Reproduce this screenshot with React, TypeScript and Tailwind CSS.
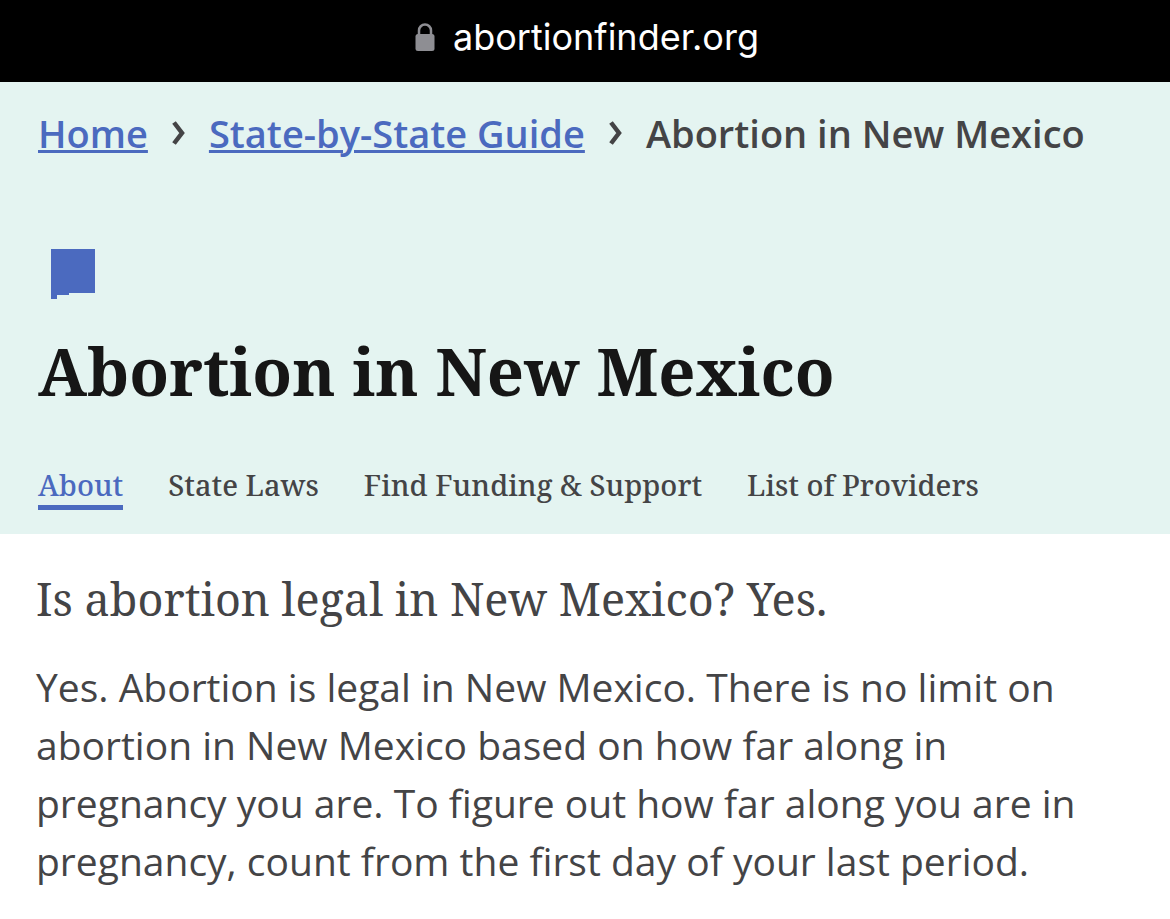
import type { ReactNode } from "react";

const tabs = [
  { label: "About", href: "#about" },
  { label: "State Laws", href: "#state-laws" },
  { label: "Find Funding & Support", href: "#funding" },
  { label: "List of Providers", href: "#providers" },
];

function Chevron() {
  return (
    <svg aria-hidden viewBox="0 0 13 24" className="h-6 w-[13px] shrink-0" fill="none">
      <path d="M2 1.500L10 12L2 22.500" stroke="#444446" strokeWidth="4.500" />
    </svg>
  );
}

function Crumb({ href, children }: { href: string; children: ReactNode }) {
  return (
    <a href={href} className="text-[#4b6abf] underline decoration-3 underline-offset-2">
      {children}
    </a>
  );
}

export default function App() {
  return (
    <div className="bg-white font-['Open_Sans','Noto_Sans',sans-serif] text-[#444446]">
      {/* browser address bar */}
      <div className="flex h-[82px] items-center justify-center gap-[18px] bg-black pb-2 pl-1 font-['Inter',sans-serif] text-4xl text-white">
        <svg aria-hidden viewBox="0 0 20 28" className="h-7 w-5" fill="none">
          <rect x="0.500" y="11" width="19" height="17" rx="2.500" fill="#8e8e93" />
          <path d="M4 12V7.500a6 6 0 0 1 12 0V12" stroke="#8e8e93" strokeWidth="2.500" />
        </svg>
        <span>abortionfinder.org</span>
      </div>

      <header className="bg-[#e4f4f1] px-[38px] py-6">
        <nav
          aria-label="Breadcrumb"
          className="flex items-center gap-6 text-[38px] leading-[54px] font-semibold whitespace-nowrap"
        >
          <Crumb href="#home">Home</Crumb>
          <Chevron />
          <Crumb href="#guide">State-by-State Guide</Crumb>
          <Chevron />
          <span aria-current="page">Abortion in New Mexico</span>
        </nav>

        {/* outline of the state */}
        <svg aria-hidden viewBox="0 0 44 50" className="mt-[89px] ml-[13px] h-[50px] w-11">
          <path d="M0 0H44V44H18V46H6V50H0Z" fill="#4b6abf" />
        </svg>

        <h1 className="mt-8 font-['Noto_Serif','DejaVu_Serif',serif] text-[65px] leading-[80px] font-bold text-[#161616]">
          Abortion in New Mexico
        </h1>

        <nav
          aria-label="Sections"
          className="mt-[54px] flex gap-[45px] font-['Noto_Serif','DejaVu_Serif',serif] text-[29px] leading-10 font-medium whitespace-nowrap"
        >
          {tabs.map((tab, i) => (
            <a
              key={tab.href}
              href={tab.href}
              className={i === 0 ? "border-b-5 border-[#4b6abf] text-[#4b6abf]" : ""}
            >
              {tab.label}
            </a>
          ))}
        </nav>
      </header>

      <main className="px-9 pt-9">
        <h2 className="font-['Noto_Serif','DejaVu_Serif',serif] text-[45px] leading-[58px]">
          Is abortion legal in New Mexico? Yes.
        </h2>
        <p className="mt-[30px] text-[39px] leading-[58px]">
          Yes. Abortion is legal in New Mexico. There is no limit on abortion in New Mexico based on how far along in
          pregnancy you are. To figure out how far along you are in pregnancy, count from the first day of your last
          period.
        </p>
      </main>
    </div>
  );
}
